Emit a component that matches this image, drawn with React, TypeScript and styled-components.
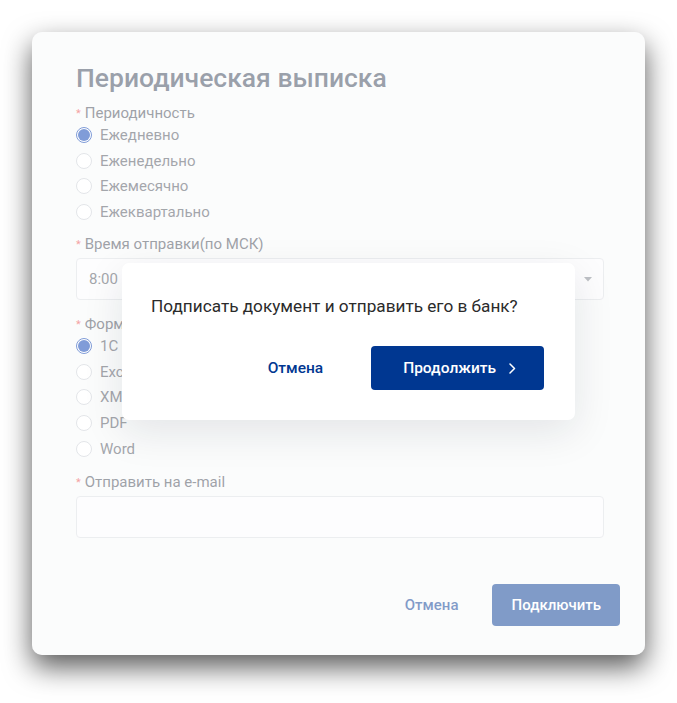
import React from "react";
import styled, { createGlobalStyle } from "styled-components";

const GlobalStyle = createGlobalStyle`
  html, body { margin: 0; padding: 0; background: #ffffff; overflow: hidden; }
  body { font-family: Roboto, "Noto Sans", "Liberation Sans", sans-serif; -webkit-font-smoothing: antialiased; }
  * { box-sizing: border-box; }
`;

const Page = styled.div`
  width: 677px;
  height: 703px;
  padding: 32px;
`;

const Card = styled.div`
  position: relative;
  width: 613px;
  height: 623px;
  background: #f7f8f9;
  border-radius: 10px;
  box-shadow: 0 12px 28px rgba(0, 0, 0, 0.65);
  padding: 29px 41px 29px 44px;
  display: flex;
  flex-direction: column;
`;

const Title = styled.h2`
  margin: 0 0 10px;
  font-size: 26.5px;
  line-height: 33px;
  font-weight: 500;
  color: #354155;
`;

const FormItem = styled.div<{ $mb?: number }>`
  display: flex;
  flex-direction: column;
  margin-bottom: ${(p) => p.$mb ?? 15}px;
`;

const Label = styled.div`
  display: flex;
  align-items: center;
  font-size: 15px;
  line-height: 18px;
  color: #3d4450;
  margin-bottom: 5px;
`;

const Star = styled.span`
  color: #e84444;
  font-size: 11px;
  margin-right: 4px;
  position: relative;
  top: 1px;
`;

const RadioGroup = styled.div`
  display: flex;
  flex-direction: column;
  gap: 9.7px;
`;

const RadioRow = styled.label`
  display: flex;
  align-items: center;
  height: 16px;
  gap: 8px;
  font-size: 15px;
  color: #474c57;
`;

const Circle = styled.span<{ $checked?: boolean }>`
  width: 16px;
  height: 16px;
  border-radius: 50%;
  border: 1px solid ${(p) => (p.$checked ? "#0039b0" : "#c6cbd2")};
  background: #ffffff;
  display: flex;
  align-items: center;
  justify-content: center;
  flex-shrink: 0;
  &::after {
    content: "";
    width: 12px;
    height: 12px;
    border-radius: 50%;
    background: ${(p) => (p.$checked ? "#0039b0" : "transparent")};
  }
`;

const SelectBox = styled.div`
  height: 42px;
  border: 1px solid #d9dce1;
  border-radius: 4px;
  background: #fbfbfc;
  display: flex;
  align-items: center;
  justify-content: space-between;
  padding: 0 11px 0 12px;
  font-size: 15px;
  color: #474c57;
`;

const InputBox = styled.div`
  height: 42px;
  border: 1px solid #d9dce1;
  border-radius: 4px;
  background: #fbfbfc;
`;

const Footer = styled.div`
  margin-top: auto;
  margin-right: -16px;
  display: flex;
  justify-content: flex-end;
  align-items: center;
  gap: 17px;
`;

const TextButton = styled.button<{ $fs: number }>`
  border: none;
  background: transparent;
  font-family: inherit;
  font-size: ${(p) => p.$fs}px;
  font-weight: 500;
  color: #003791;
  padding: 0 16px;
  height: 42px;
  cursor: pointer;
`;

const PrimaryButton = styled.button<{ $h: number; $pl: number; $pr: number; $fs: number }>`
  border: none;
  border-radius: 4px;
  background: #003791;
  color: #ffffff;
  font-family: inherit;
  font-size: ${(p) => p.$fs}px;
  font-weight: 500;
  height: ${(p) => p.$h}px;
  padding: 0 ${(p) => p.$pr}px 0 ${(p) => p.$pl}px;
  display: flex;
  align-items: center;
  gap: 13px;
  cursor: pointer;
`;

const Mask = styled.div`
  position: absolute;
  inset: 0;
  border-radius: 10px;
  background: rgba(255, 255, 255, 0.5);
`;

const Dialog = styled.div`
  position: absolute;
  left: 90px;
  top: 231px;
  width: 453px;
  background: #ffffff;
  border-radius: 7px;
  box-shadow: 0 12px 40px rgba(20, 30, 50, 0.1);
  padding: 32px 31px 30px 29px;
  display: flex;
  flex-direction: column;
  gap: 28px;
`;

const DialogText = styled.div`
  font-size: 17.2px;
  line-height: 23px;
  color: #2b2b2b;
`;

const DialogActions = styled.div`
  display: flex;
  justify-content: flex-end;
  align-items: center;
  gap: 24px;
`;

const DialogCancel = styled(TextButton)`
  padding: 0 24px;
  height: 44px;
`;

const Chevron = () => (
  <svg width="7" height="11" viewBox="0 0 7 11" fill="none">
    <path d="M1 1l4.5 4.5L1 10" stroke="#ffffff" strokeWidth="1.5" strokeLinecap="round" strokeLinejoin="round" />
  </svg>
);

const Caret = () => (
  <svg width="8" height="5" viewBox="0 0 8 5">
    <path d="M0 0h8L4 4.5z" fill="#7d838c" />
  </svg>
);

const Radio = ({ label, checked }: { label: string; checked?: boolean }) => (
  <RadioRow>
    <Circle $checked={checked} />
    {label}
  </RadioRow>
);

export default function App() {
  return (
    <>
      <GlobalStyle />
      <Page>
        <Card>
          <Title>Периодическая выписка</Title>
          <FormItem>
            <Label>
              <Star>*</Star>Периодичность
            </Label>
            <RadioGroup>
              <Radio label="Ежедневно" checked />
              <Radio label="Еженедельно" />
              <Radio label="Ежемесячно" />
              <Radio label="Ежеквартально" />
            </RadioGroup>
          </FormItem>
          <FormItem>
            <Label>
              <Star>*</Star>Время отправки(по МСК)
            </Label>
            <SelectBox>
              <span>8:00</span>
              <Caret />
            </SelectBox>
          </FormItem>
          <FormItem $mb={16.5}>
            <Label>
              <Star>*</Star>Формат
            </Label>
            <RadioGroup>
              <Radio label="1С" checked />
              <Radio label="Excel" />
              <Radio label="XML" />
              <Radio label="PDF" />
              <Radio label="Word" />
            </RadioGroup>
          </FormItem>
          <FormItem>
            <Label>
              <Star>*</Star>Отправить на e-mail
            </Label>
            <InputBox />
          </FormItem>
          <Footer>
            <TextButton $fs={15}>Отмена</TextButton>
            <PrimaryButton $h={42} $pl={20} $pr={19} $fs={15}>
              Подключить
            </PrimaryButton>
          </Footer>
          <Mask />
          <Dialog>
            <DialogText>Подписать документ и отправить его в банк?</DialogText>
            <DialogActions>
              <DialogCancel $fs={15.5}>Отмена</DialogCancel>
              <PrimaryButton $h={44} $pl={32} $pr={28} $fs={15.5}>
                Продолжить
                <Chevron />
              </PrimaryButton>
            </DialogActions>
          </Dialog>
        </Card>
      </Page>
    </>
  );
}
